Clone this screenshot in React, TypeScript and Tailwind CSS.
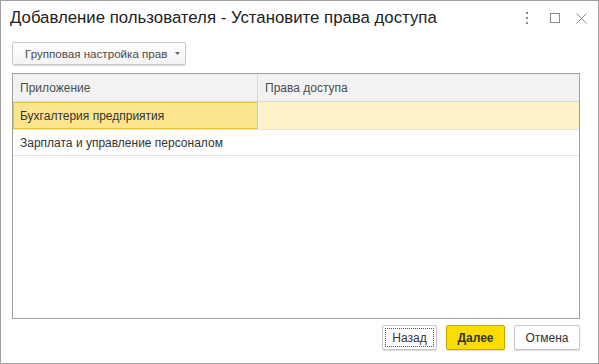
import React from "react";

export default function App() {
  return (
    <div
      className="w-[599px] h-[364px] border border-[#a0a0a0] bg-white flex flex-col text-[#333333] font-['Liberation_Sans',Arial,sans-serif]"
    >
      <div className="h-[34px] flex items-center justify-between pl-[9px] pr-[11px]">
        <div className="text-[16.8px] text-[#222] leading-none whitespace-nowrap">
          Добавление пользователя - Установите права доступа
        </div>
        <div className="flex items-center">
          <svg width="4" height="12" viewBox="0 0 4 12">
            <rect x="1" y="0" width="2" height="2" fill="#8a8a8a" />
            <rect x="1" y="5" width="2" height="2" fill="#8a8a8a" />
            <rect x="1" y="10" width="2" height="2" fill="#8a8a8a" />
          </svg>
          <svg className="ml-[21px]" width="10" height="10" viewBox="0 0 10 10">
            <rect x="0.5" y="0.5" width="9" height="9" fill="none" stroke="#8a8a8a" />
          </svg>
          <svg className="ml-[16px]" width="11" height="11" viewBox="0 0 11 11">
            <path d="M0.5 0.5 L10.5 10.5 M10.5 0.5 L0.5 10.5" stroke="#8a8a8a" strokeWidth="1" />
          </svg>
        </div>
      </div>
      <div className="flex-1 flex flex-col pl-[11px] pr-[18px]">
        <div className="mt-[7px] flex">
          <button className="h-[23px] w-[174px] border border-[#c8c8c8] rounded-[2px] bg-gradient-to-b from-white to-[#f4f4f4] shadow-[0_1px_1px_rgba(0,0,0,0.15)] flex items-center pl-[12px] text-[11.6px] text-[#4a4a4a] whitespace-nowrap font-['Liberation_Sans',Arial,sans-serif]">
            Групповая настройка прав
            <svg className="ml-[8px]" width="5" height="3" viewBox="0 0 5 3">
              <path d="M0 0 H5 L2.5 3 Z" fill="#666" />
            </svg>
          </button>
        </div>
        <div className="mt-[8px] h-[246px] border border-[#a0a0a0] flex flex-col text-[12px]">
          <div className="h-[28px] flex bg-[#f2f2f2] border-b border-[#dcdcdc] text-[#4d4d4d]">
            <div className="w-[245px] border-r border-[#dcdcdc] flex items-center pl-[7px]">
              Приложение
            </div>
            <div className="flex-1 flex items-center pl-[7px]">Права доступа</div>
          </div>
          <div className="h-[28px] flex border-b border-[#e3e3e3]">
            <div className="w-[245px] bg-[#fde58e] border border-[#f1c232] flex items-center pl-[6px] text-[#333]">
              Бухгалтерия предприятия
            </div>
            <div className="flex-1 bg-[#fdf2c8] ml-[1px]"></div>
          </div>
          <div className="h-[26px] flex items-center pl-[7px] border-b border-[#e3e3e3]">
            Зарплата и управление персоналом
          </div>
        </div>
        <div className="mt-[6px] flex justify-end gap-[9px]">
          <button className="h-[25px] w-[55px] border border-[#c8c8c8] rounded-[2px] bg-white shadow-[0_1px_1px_rgba(0,0,0,0.15)] p-[2px] text-[12px] text-[#333] font-['Liberation_Sans',Arial,sans-serif]">
            <div className="w-full h-full border border-dotted border-[#555] flex items-center justify-center">
              Назад
            </div>
          </button>
          <button className="h-[25px] w-[59px] border border-[#c9a800] rounded-[2px] bg-[#fadd00] shadow-[0_1px_1px_rgba(0,0,0,0.15)] flex items-center justify-center text-[12px] font-bold text-[#333] font-['Liberation_Sans',Arial,sans-serif]">
            Далее
          </button>
          <button className="h-[25px] w-[66px] border border-[#c8c8c8] rounded-[2px] bg-white shadow-[0_1px_1px_rgba(0,0,0,0.15)] flex items-center justify-center text-[12px] text-[#333] font-['Liberation_Sans',Arial,sans-serif]">
            Отмена
          </button>
        </div>
      </div>
    </div>
  );
}
